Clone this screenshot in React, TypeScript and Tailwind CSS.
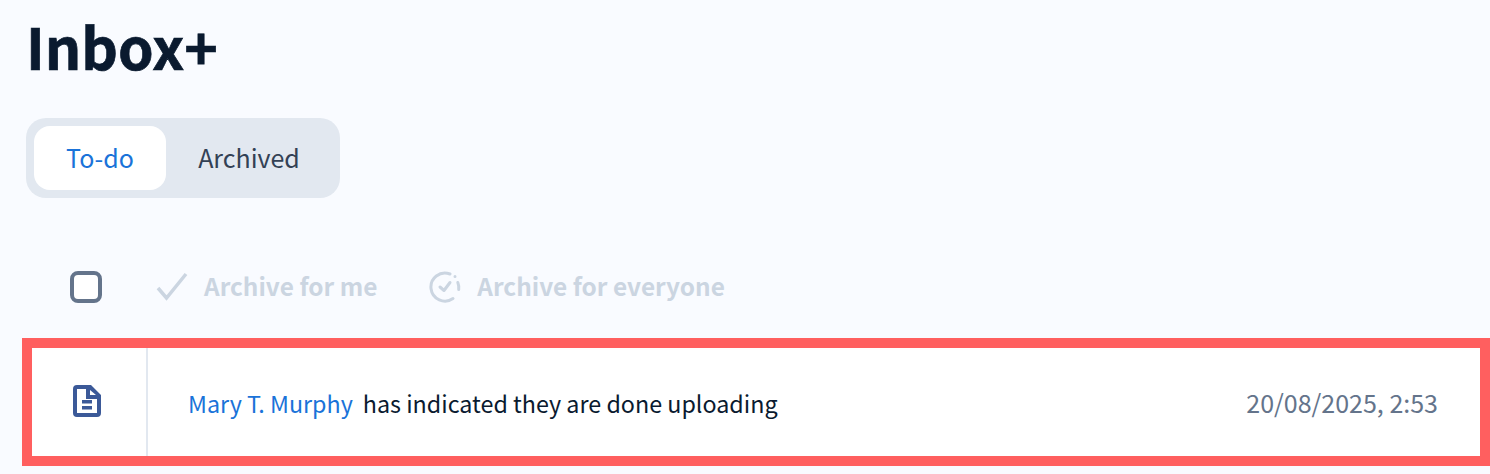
export default function App() {
  return (
    <div className="h-[474px] w-[1490px] overflow-hidden bg-[#f9fbff] font-['Noto_Sans_CJK_JP',sans-serif]">
      <div className="pl-[26px] pt-[10px]">
        <h1 className="text-[57px] leading-[70px] font-bold text-[#0a1a2f] [-webkit-text-stroke:0.7px_#0a1a2f]">Inbox+</h1>
        <div className="mt-[38px] flex h-[80px] w-[314px] items-center rounded-[20px] bg-[#e2e8f0] p-2">
          <div className="flex h-[64px] w-[132px] items-center justify-center rounded-[16px] bg-white pb-[1px] text-[25px] text-[#1a73d9]">
            To-do
          </div>
          <div className="flex h-[64px] flex-1 items-center justify-center pb-[1px] text-[25px] text-[#334155]">
            Archived
          </div>
        </div>
      </div>
      <div className="mt-[73px] flex h-[32px] items-center pl-[70px] text-[24.400px] font-bold text-[#cbd5e1]">
        <div className="h-8 w-8 rounded-[8px] border-[4px] border-[#64748b] bg-white" />
        <svg className="ml-[54px] h-8 w-8" viewBox="0 0 32 32" fill="none">
          <path d="M2 17 L10.500 27 L30 3" stroke="#cbd5e1" strokeWidth="3.500" />
        </svg>
        <span className="ml-[16px] pb-[2px]">Archive for me</span>
        <svg className="ml-[52px] h-8 w-8" viewBox="0 0 32 32" fill="none" stroke="#cbd5e1" strokeWidth="3" strokeLinecap="round" strokeLinejoin="round">
          <path d="M21 3A14 14 0 1 0 24 27.500" />
          <path d="M26 5.500v.01M28.800 11.500A14 14 0 0 1 29.700 18.500" />
          <path d="M11 16l4 3.500 6-8" />
        </svg>
        <span className="ml-[16px] pb-[2px]">Archive for everyone</span>
      </div>
      <div className="ml-[22px] mt-[35px] flex h-[128px] w-[1468px] items-center border-[10px] border-[#ff5f5f] bg-white">
        <div className="flex h-full w-[116px] items-center justify-center border-r-2 border-[#e2e8f0]">
          <svg className="mb-[3px] mr-[5px] h-8 w-7" viewBox="0 0 28 32">
            <path
              fillRule="evenodd"
              d="M4 0H18L28 10V28a4 4 0 0 1-4 4H4a4 4 0 0 1-4-4V4a4 4 0 0 1 4-4ZM4 4V28H24V14H13V4ZM17 5V10H23Z"
              fill="#3b5998"
            />
            <path d="M9 15h10v3.500H9ZM9 21h10v3.500H9Z" fill="#3b5998" />
          </svg>
        </div>
        <div className="flex flex-1 items-center justify-between pl-[40px] pr-[42px] pt-[2px] text-[23.300px]">
          <div className="flex gap-[10px]">
            <span className="text-[#1a73d9]">Mary T. Murphy</span>
            <span className="text-[#0a1a2f]">has indicated they are done uploading</span>
          </div>
          <span className="text-[25px] text-[#64748b]">20/08/2025, 2:53</span>
        </div>
      </div>
    </div>
  );
}
